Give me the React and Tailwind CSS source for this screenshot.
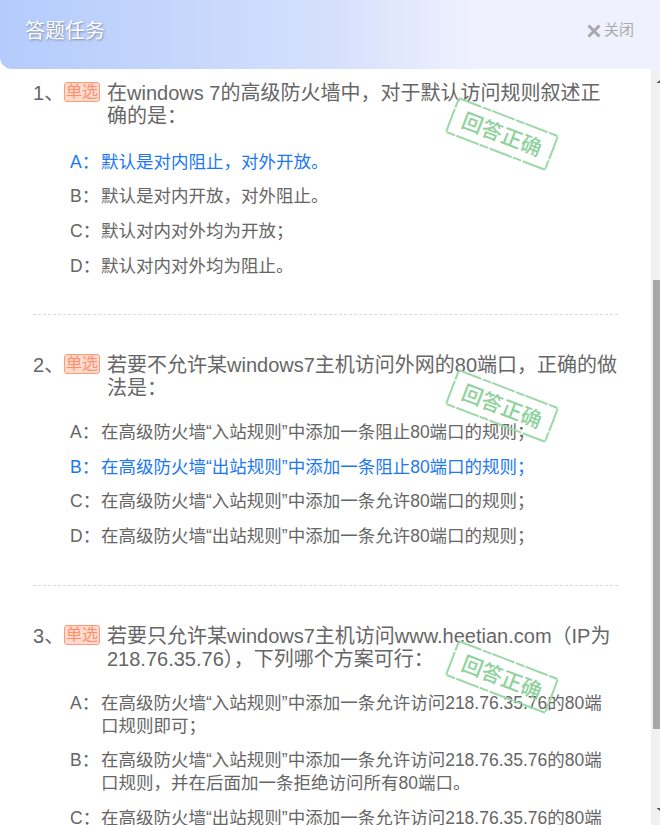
const FONT = "font-['Liberation_Sans','Noto_Sans_CJK_SC',sans-serif]";

function Stamp({ className }) {
  return (
    <svg width="130" height="90" viewBox="0 0 130 90" className={`absolute left-[437px] pointer-events-none ${className}`}>
      <g transform="rotate(21 65 45)">
        <rect x="12" y="27" width="106" height="36" fill="none" stroke="#9dd8a8" strokeWidth="2" strokeDasharray="24 1.5 9 1" />
        <text x="65" y="53" textAnchor="middle" fontSize="21" fontWeight="500" fill="#8fd29c" fontFamily="'Noto Sans CJK SC',sans-serif">回答正确</text>
      </g>
    </svg>
  );
}

function Option({ letter, text, active }) {
  return (
    <div className={`flex py-[5.8px] pl-[37px] text-[17.5px] leading-[23px] ${active ? "text-[#1c78f5]" : "text-[#666666]"}`}>
      <span className="w-[31px] shrink-0">{letter}：</span>
      <span className="flex-1">{text}</span>
    </div>
  );
}

function Question({ n, title, options, active, optionsClass, className }) {
  return (
    <section className={className}>
      <div className="flex text-[20px] leading-[23px] text-[#666666]">
        <span className="w-[31px] shrink-0">{n}、</span>
        <span className="mr-[7px] h-[20px] w-[36px] shrink-0 rounded-[3px] border border-[#ff9a7a] bg-[#ffdacd] text-center text-[16px] leading-[18px] text-[#ff8f6c]">单选</span>
        <span className="flex-1">{title}</span>
      </div>
      <div className={optionsClass}>
        {options.map((o, i) => (
          <Option key={i} letter={"ABCD"[i]} text={o} active={i === active} />
        ))}
      </div>
    </section>
  );
}

export default function App() {
  return (
    <div className={`h-[825px] w-[660px] overflow-hidden bg-white ${FONT}`}>
      <header className="flex h-[69px] items-center justify-between rounded-bl-[12px] bg-[linear-gradient(90deg,#b4cbfb_0%,#d5e0fd_50%,#eff1fe_72%)] pb-[8px] pl-[25px] pr-[26px]">
        <h1 className="text-[20px] text-white [text-shadow:1px_1px_2px_rgba(70,80,110,0.55)]">答题任务</h1>
        <div className="flex items-center gap-[3px] text-[15px] text-[#aaaaaa]">
          <svg width="14" height="14" viewBox="0 0 14 14">
            <path d="M1.5 1.5 L12.5 12.5 M12.5 1.5 L1.5 12.5" stroke="#a9a9ab" strokeWidth="3" />
          </svg>
          <span>关闭</span>
        </div>
      </header>

      <div className="flex h-[756px]">
        <main className="relative flex-1 overflow-hidden pl-[33px] pr-[33px] pt-[13px]">
          <Question
            n="1"
            title="在windows 7的高级防火墙中，对于默认访问规则叙述正确的是："
            active={0}
            optionsClass="mt-[17px]"
            options={["默认是对内阻止，对外开放。", "默认是对内开放，对外阻止。", "默认对内对外均为开放；", "默认对内对外均为阻止。"]}
          />
          <div className="mt-[31px] border-t border-dashed border-[#d9d9d9]" />
          <Question
            className="mt-[39px]"
            n="2"
            title="若要不允许某windows7主机访问外网的80端口，正确的做法是："
            active={1}
            optionsClass="mt-[15px]"
            options={["在高级防火墙“入站规则”中添加一条阻止80端口的规则；", "在高级防火墙“出站规则”中添加一条阻止80端口的规则；", "在高级防火墙“入站规则”中添加一条允许80端口的规则；", "在高级防火墙“出站规则”中添加一条允许80端口的规则；"]}
          />
          <div className="mt-[31px] border-t border-dashed border-[#d9d9d9]" />
          <Question
            className="mt-[39px]"
            n="3"
            title="若要只允许某windows7主机访问www.heetian.com（IP为218.76.35.76），下列哪个方案可行："
            optionsClass="mt-[15px]"
            options={["在高级防火墙“入站规则”中添加一条允许访问218.76.35.76的80端口规则即可；", "在高级防火墙“入站规则”中添加一条允许访问218.76.35.76的80端口规则，并在后面加一条拒绝访问所有80端口。", "在高级防火墙“出站规则”中添加一条允许访问218.76.35.76的80端口规则即可；"]}
          />
          <Stamp className="top-[20px]" />
          <Stamp className="top-[292px]" />
          <Stamp className="top-[563px]" />
        </main>
        <aside className="relative w-[9px] shrink-0 bg-[#f1f1f1]">
          <div className="absolute left-[2px] right-0 top-[211px] h-[449px] bg-[#a8a8a8]" />
          <svg width="9" height="4" viewBox="0 0 9 4" className="absolute left-0 top-[11px]"><path d="M9 0 L5.5 3 H9 Z" fill="#555" /></svg>
          <svg width="9" height="4" viewBox="0 0 9 4" className="absolute left-0 bottom-[13px]"><path d="M5.5 0 H9 V3 Z" fill="#555" /></svg>
        </aside>
      </div>
    </div>
  );
}
